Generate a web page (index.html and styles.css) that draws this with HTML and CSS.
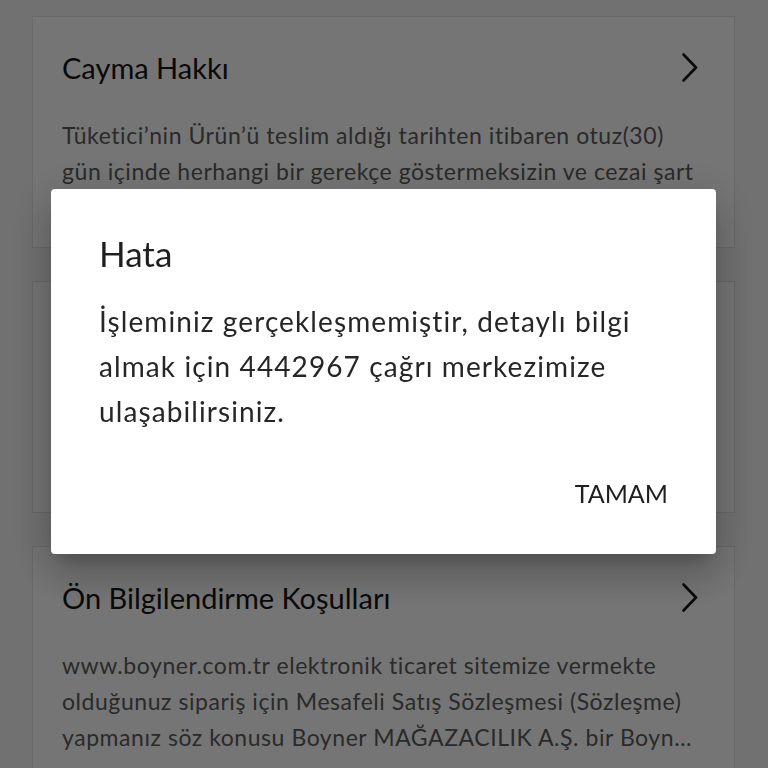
FILE: index.html
```html
<!DOCTYPE html>
<html lang="tr">
<head>
<meta charset="utf-8">
<title>Sözleşmeler</title>
<link rel="stylesheet" href="styles.css">
</head>
<body>
<main class="page">
  <section class="card">
    <div class="card-head">
      <h2 class="card-title">Cayma Hakkı</h2>
      <svg class="chev" viewBox="0 0 16 30" width="16" height="30"><path d="M1.5 1.5 L14 14.5 L1.5 27.5" fill="none" stroke="currentColor" stroke-width="2.6" stroke-linecap="round" stroke-linejoin="round"/></svg>
    </div>
    <p class="card-text">Tüketici’nin Ürün’ü teslim aldığı tarihten itibaren otuz(30) gün içinde herhangi bir gerekçe göstermeksizin ve cezai şart ödemeksizin sözleşmeden cayma hakkı bulunmaktadır.</p>
  </section>
  <section class="card">
    <div class="card-head">
      <h2 class="card-title">Mesafeli Satış Sözleşmesi</h2>
      <svg class="chev" viewBox="0 0 16 30" width="16" height="30"><path d="M1.5 1.5 L14 14.5 L1.5 27.5" fill="none" stroke="currentColor" stroke-width="2.6" stroke-linecap="round" stroke-linejoin="round"/></svg>
    </div>
    <p class="card-text">İşbu sözleşmenin konusu, Alıcı’nın Satıcı’ya ait internet sitesinden elektronik ortamda siparişini verdiği ürünün satışı ve teslimi ile ilgili olarak tarafların hak ve yükümlülükleridir.</p>
  </section>
  <section class="card">
    <div class="card-head">
      <h2 class="card-title">Ön Bilgilendirme Koşulları</h2>
      <svg class="chev" viewBox="0 0 16 30" width="16" height="30"><path d="M1.5 1.5 L14 14.5 L1.5 27.5" fill="none" stroke="currentColor" stroke-width="2.6" stroke-linecap="round" stroke-linejoin="round"/></svg>
    </div>
    <p class="card-text">www.boyner.com.tr elektronik ticaret sitemize vermekte olduğunuz sipariş için Mesafeli Satış Sözleşmesi (Sözleşme) yapmanız söz konusu Boyner MAĞAZACILIK A.Ş. bir Boyner Grup şirketidir.</p>
  </section>
</main>
<div class="scrim"></div>
<div class="dialog" role="alertdialog">
  <h1 class="dialog-title">Hata</h1>
  <p class="dialog-text">İşleminiz gerçekleşmemiştir, detaylı bilgi almak için 4442967 çağrı merkezimize ulaşabilirsiniz.</p>
  <div class="dialog-actions">
    <button class="dialog-btn" type="button">TAMAM</button>
  </div>
</div>
</body>
</html>
```
FILE: styles.css
```css
* { box-sizing: border-box; }
html, body { margin: 0; padding: 0; }
body {
  background: #f6f6f6;
  font-family: Lato, "Open Sans", sans-serif;
  height: 768px;
  overflow: hidden;
}
.page {
  display: flex;
  flex-direction: column;
  gap: 33px;
  padding: 16px 33px 0 32px;
}
.card {
  background: #ffffff;
  border: 1px solid #e4e4e4;
  height: 232px;
  padding: 32px 36px 0 29px;
  flex: none;
}
.card-head {
  display: flex;
  align-items: center;
  justify-content: space-between;
  height: 38px;
}
.card-title {
  margin: 0;
  font-size: 29px;
  font-weight: 400;
  color: #141414;
  line-height: 38px;
  letter-spacing: 0;
}
.chev { color: #141414; display: block; }
.card-text {
  margin: 30px 0 0;
  font-size: 23px;
  line-height: 36px;
  letter-spacing: 0.55px;
  color: #5c5c5c;
  display: -webkit-box;
  -webkit-line-clamp: 3;
  -webkit-box-orient: vertical;
  overflow: hidden;
}
.scrim {
  position: fixed;
  inset: 0;
  background: rgba(0, 0, 0, 0.54);
}
.dialog {
  position: fixed;
  left: 51px;
  top: 189px;
  width: 665px;
  height: 365px;
  background: #fff;
  border-radius: 4px;
  padding: 43px 48px 0 48px;
  box-shadow: 0 11px 15px -7px rgba(0,0,0,0.2), 0 24px 38px 3px rgba(0,0,0,0.14), 0 9px 46px 8px rgba(0,0,0,0.12);
  display: flex;
  flex-direction: column;
}
.dialog-title {
  margin: 0;
  font-size: 35px;
  font-weight: 400;
  line-height: 42px;
  color: #1f1f1f;
}
.dialog-text {
  margin: 25px 0 0;
  font-size: 28px;
  line-height: 45px;
  letter-spacing: 1.1px;
  color: #262626;
}
.dialog-actions {
  display: flex;
  justify-content: flex-end;
  margin-top: 43px;
}
.dialog-btn {
  background: none;
  border: 0;
  padding: 0;
  font-family: inherit;
  font-size: 25px;
  line-height: 32px;
  color: #1f1f1f;
  letter-spacing: 0;
}
```
